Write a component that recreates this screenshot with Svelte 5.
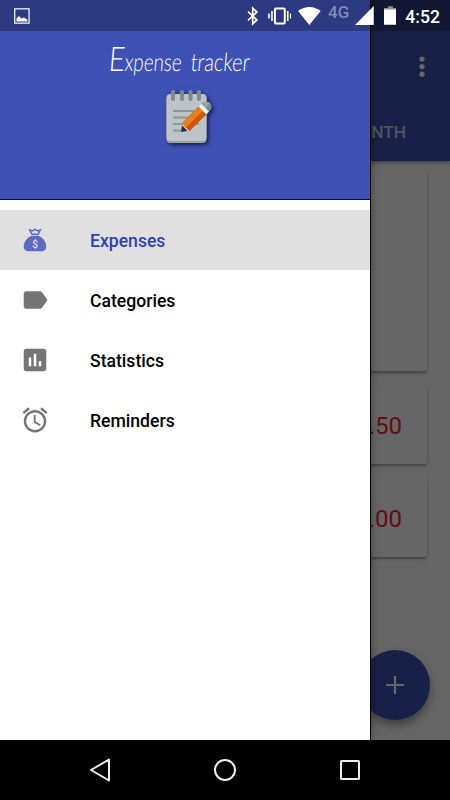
<script>
let selected = $state('expenses');

const items = [
  { id: 'expenses', label: 'Expenses' },
  { id: 'categories', label: 'Categories' },
  { id: 'statistics', label: 'Statistics' },
  { id: 'reminders', label: 'Reminders' }
];

const amounts = ['12.50', '45.00'];
</script>

<div class="phone">
  <div class="screen">
    <header class="app-bar">
      <div class="toolbar">
        <svg width="6" height="22" viewBox="0 0 6 22" fill="#fff">
          <circle cx="3" cy="3" r="2.6" />
          <circle cx="3" cy="10.6" r="2.6" />
          <circle cx="3" cy="18.2" r="2.6" />
        </svg>
      </div>
      <div class="tabs">MONTH</div>
    </header>
    <main class="content">
      <div class="card chart"></div>
      {#each amounts as amount}
        <div class="card amount">{amount}</div>
      {/each}
    </main>
    <button class="fab" aria-label="Add">
      <svg width="18" height="18" viewBox="0 0 18 18" stroke="#fff" stroke-width="2.2">
        <path d="M9 0v18M0 9h18" />
      </svg>
    </button>
  </div>

  <div class="scrim"></div>

  <aside class="drawer">
    <div class="drawer-header">
      <svg class="title" width="150" height="46" viewBox="0 0 150 46">
        <g transform="translate(0 28) skewX(-5)">
          <text class="cap" x="2" y="0" textLength="16" lengthAdjust="spacingAndGlyphs">E</text>
          <text x="18" y="0" textLength="57" lengthAdjust="spacingAndGlyphs">xpense</text>
          <text x="84" y="0" textLength="59" lengthAdjust="spacingAndGlyphs">tracker</text>
        </g>
      </svg>
      <svg class="logo" width="54" height="62" viewBox="0 0 54 62">
        <rect x="5.5" y="7" width="40" height="48" rx="4" fill="#95a5a5" />
        <rect x="5.5" y="6" width="40" height="47" rx="4" fill="#bdc3c7" />
        <g stroke="#7f8c8d" stroke-width="4" stroke-linecap="round">
          <path d="M12 4v7M21 4v7M29.500 4v7M38 4v7" />
        </g>
        <g stroke="#8b999b" stroke-width="2">
          <path d="M12 23h24M12 29.500h19M12 36h26M12 42.500h8" />
        </g>
        <g transform="translate(21 43) rotate(-45)">
          <path d="M-1 0L6-5.500V5.500Z" fill="#ecf0f1" />
          <path d="M-1.500 0L4-4V4Z" fill="#1f2c50" />
          <rect x="5" y="-5.500" width="24" height="11" fill="#d35400" />
          <rect x="5" y="-5.500" width="24" height="6" fill="#e67e22" />
          <rect x="29" y="-5.500" width="4" height="11" fill="#ecf0f1" />
          <path d="M33-5.500h1a5.500 5.500 0 0 1 0 11h-1z" fill="#7f8c8d" />
          <path d="M33-5.500h1a5.500 5.500 0 0 1 5.500 5.500h-6.500z" fill="#95a5a5" />
        </g>
      </svg>
    </div>
    <nav>
      {#each items as item}
        <button class="item {selected === item.id ? 'selected' : ''}" onclick={() => (selected = item.id)}>
          <svg class="icon" width="30" height="30" viewBox="0 0 24 24" fill="currentColor">
            {#if item.id === 'expenses'}
              <path d="M9.500 8.600C5.500 10 3.200 13.500 3 17c-.1 2.700 1.500 3.900 3.700 3.900h10.600c2.200 0 3.800-1.200 3.700-3.900-.2-3.500-2.500-7-6.500-8.400z" />
              <path d="M9.500 7.400L7.800 4l2.400.7L12 3.400l1.800 1.300 2.400-.7L14.500 7.400z" fill="none" stroke="currentColor" stroke-width="1.200" />
              <text x="12" y="18.200" text-anchor="middle">$</text>
            {:else if item.id === 'categories'}
              <path d="M17.630 5.840C17.270 5.330 16.670 5 16 5L5 5.010C3.900 5.010 3 5.900 3 7v10c0 1.100.9 1.990 2 1.990L16 19c.67 0 1.270-.33 1.630-.84L22 12z" />
            {:else if item.id === 'statistics'}
              <path d="M19 3H5c-1.100 0-2 .9-2 2v14c0 1.100.9 2 2 2h14c1.100 0 2-.9 2-2V5c0-1.100-.9-2-2-2zM9 17H7v-7h2v7zm4 0h-2V7h2v10zm4 0h-2v-4h2v4z" />
            {:else}
              <path d="M22 5.720l-4.600-3.860-1.290 1.530 4.600 3.860L22 5.720zM7.880 3.390L6.600 1.860 2 5.710l1.290 1.530 4.590-3.850zM12.500 8H11v6l4.750 2.850.75-1.230-4-2.370V8zM12 4c-4.970 0-9 4.030-9 9s4.020 9 9 9c4.970 0 9-4.030 9-9s-4.030-9-9-9zm0 16c-3.870 0-7-3.130-7-7s3.130-7 7-7 7 3.130 7 7-3.130 7-7 7z" />
            {/if}
          </svg>
          <span>{item.label}</span>
        </button>
      {/each}
    </nav>
  </aside>

  <div class="status-bar">
    <svg class="photo" width="16" height="16" viewBox="0 0 16 16">
      <rect x=".75" y=".75" width="14.500" height="14.500" fill="none" stroke="#fff" stroke-width="1.200" />
      <path d="M2.500 13.500V10.500L5 8l2.500 2.500L10 9.500l3.500 2v2z" fill="#fff" />
    </svg>
    <svg class="bluetooth" width="12" height="20" viewBox="0 0 12 20" fill="none" stroke="#fff" stroke-width="1.700">
      <path d="M1 5.500l9 8.500-4.200 4V2L10 6l-9 8.500" />
    </svg>
    <svg class="vibrate" width="24" height="18" viewBox="0 0 24 18" fill="none" stroke="#fff">
      <rect x="7" y="1.500" width="10" height="15" rx="1" stroke-width="2" />
      <path d="M4 4v10M1 6.500v5M20 4v10M23 6.500v5" stroke-width="1.600" />
    </svg>
    <svg class="wifi" width="23" height="18" viewBox="0 0 23 18" fill="#fff">
      <path d="M11.500 18L0 4Q11.500-4 23 4z" />
    </svg>
    <span class="network">4G</span>
    <svg class="signal" width="19" height="19" viewBox="0 0 19 19" fill="#fff">
      <path d="M19 0v19H0z" />
    </svg>
    <svg class="battery" width="13" height="19" viewBox="0 0 13 19" fill="#fff">
      <path d="M4 0h5v2h4v2H0V2h4z" opacity=".5" />
      <path d="M0 3.500h13V18q0 1-1 1H1q-1 0-1-1z" />
    </svg>
    <span class="clock">4:52</span>
  </div>

  <div class="nav-bar">
    <svg width="24" height="26" viewBox="0 0 24 26">
      <path d="M21 2.500v21L3 13z" />
    </svg>
    <svg width="24" height="24" viewBox="0 0 24 24">
      <circle cx="12" cy="12" r="10" />
    </svg>
    <svg width="24" height="24" viewBox="0 0 24 24">
      <rect x="3" y="3" width="18" height="18" rx=".5" />
    </svg>
  </div>
</div>

<style>
:global(body) {
  background: #000;
}

.phone {
  position: relative;
  display: flex;
  flex-direction: column;
  width: 450px;
  height: 800px;
  overflow: hidden;
  font-family: Roboto, sans-serif;
}

.screen {
  position: relative;
  flex: 1;
  display: flex;
  flex-direction: column;
  background: #fdfdfd;
}

.app-bar {
  box-sizing: border-box;
  height: 161px;
  padding-top: 31px;
  background: #3f51b5;
  color: #fff;
  box-shadow: 0 1px 5px rgba(0, 0, 0, 0.5);
}

.toolbar {
  display: flex;
  align-items: center;
  justify-content: flex-end;
  height: 71px;
  padding-right: 25px;
}

.tabs {
  padding-right: 44px;
  line-height: 61px;
  text-align: right;
  font-size: 17.2px;
  font-weight: 500;
  color: rgba(255, 255, 255, 0.7);
}

.content {
  display: flex;
  flex-direction: column;
  gap: 14px;
  padding: 10px 23px 0 22px;
}

.card {
  height: 79px;
  background: #fff;
  border-radius: 3px;
  box-shadow: 0 2px 3px rgba(0, 0, 0, 0.35);
}

.chart {
  height: 200px;
}

.amount {
  padding-right: 25px;
  line-height: 82px;
  text-align: right;
  font-size: 24px;
  color: #f02832;
}

.fab {
  position: absolute;
  right: 20px;
  bottom: 20px;
  display: flex;
  align-items: center;
  justify-content: center;
  width: 70px;
  height: 70px;
  padding: 0;
  border: none;
  border-radius: 50%;
  background: #3f51b5;
  box-shadow: 0 5px 10px rgba(0, 0, 0, 0.4);
}

.scrim {
  position: absolute;
  inset: 0 0 60px;
  background: rgba(0, 0, 0, 0.6);
}

.drawer {
  position: absolute;
  top: 0;
  left: 0;
  width: 370px;
  height: 740px;
  background: #fff;
  border-right: 1px solid #000;
  box-shadow: 0 0 8px rgba(0, 0, 0, 0.4);
}

.drawer-header {
  box-sizing: border-box;
  display: flex;
  flex-direction: column;
  align-items: center;
  height: 200px;
  padding-top: 43px;
  background: #3f51b5;
  border-bottom: 1px solid #00007e;
}

.title {
  margin-right: 8px;
  overflow: visible;
  font-family: "Segoe Script", "Bradley Hand", Lato, sans-serif;
  font-size: 25px;
  font-weight: 300;
  fill: #fff;
}

.cap {
  font-size: 34px;
}

.logo {
  margin: -1px 0 0 6px;
  filter: drop-shadow(2px 2px 2px rgba(0, 0, 40, 0.65));
}

nav {
  padding-top: 10px;
}

.item {
  display: flex;
  align-items: center;
  gap: 40px;
  width: 100%;
  height: 60px;
  padding: 0 20px;
  border: none;
  background: none;
  font-family: inherit;
  font-size: 17.6px;
  font-weight: 500;
  color: #000;
}

.item span {
  padding-top: 2px;
}

.item.selected {
  background: #e0e0e0;
  color: #303fbf;
}

.icon {
  color: #757575;
}

.selected .icon {
  color: #5c6bc0;
}

.icon text {
  font-size: 8px;
  font-weight: 500;
  fill: #e0e0e0;
}

.status-bar {
  position: absolute;
  top: 0;
  left: 0;
  box-sizing: border-box;
  display: flex;
  align-items: center;
  width: 450px;
  height: 31px;
  padding: 0 10px 0 14px;
  background: rgba(0, 0, 0, 0.28);
  color: #fff;
}

.bluetooth {
  margin-left: 217px;
}

.vibrate {
  margin-left: 9px;
}

.wifi {
  margin-left: 7px;
}

.network {
  width: 22px;
  margin: -8px 0 0 7px;
  font-size: 17px;
  font-weight: 500;
  opacity: 0.4;
}

.signal {
  margin-left: 5px;
}

.battery {
  margin-left: 10px;
}

.clock {
  margin: 2px 0 0 9px;
  font-size: 17.6px;
  font-weight: 500;
}

.nav-bar {
  display: flex;
  align-items: center;
  justify-content: space-between;
  height: 60px;
  padding: 0 88px;
  background: #000;
}

.nav-bar svg {
  fill: none;
  stroke: #eee;
  stroke-width: 2;
  stroke-linejoin: round;
}
</style>
